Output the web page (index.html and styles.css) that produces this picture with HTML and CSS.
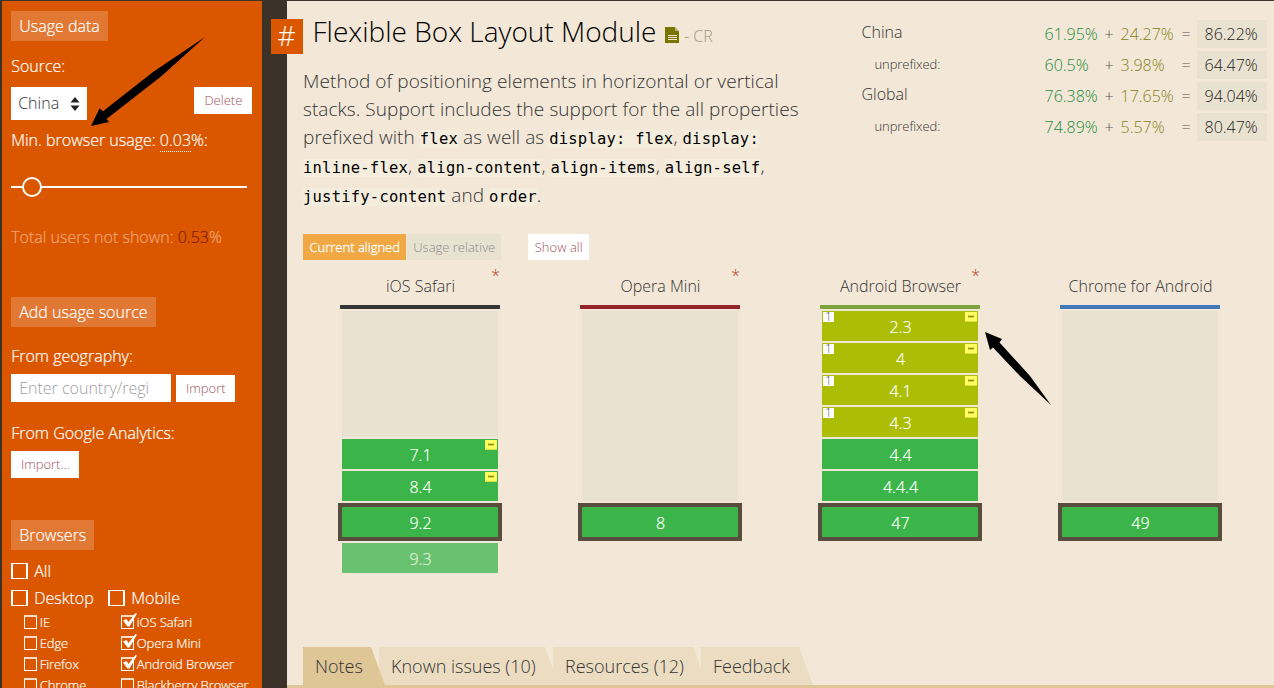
FILE: index.html
```
<!DOCTYPE html>
<html lang="en">
<head>
<meta charset="utf-8">
<title>Flexible Box Layout Module</title>
<link rel="stylesheet" href="styles.css">
</head>
<body>
<div class="page">
<aside class="sidebar">
  <section class="usage">
    <h2>Usage data</h2>
    <div class="label source">Source:</div>
    <div class="source-row"><div class="select">China <svg width="10" height="14" viewBox="0 0 10 14"><path d="M.5 5.500 5 0l4.500 5.500zM.5 8.500h9L5 14z" fill="#222"/></svg></div><button class="btn delete">Delete</button></div>
    <div class="label min">Min. browser usage: <span class="value">0.03</span>%:</div>
    <div class="slider"><i class="knob"></i></div>
    <div class="label total">Total users not shown: <span>0.53</span>%</div>
  </section>
  <section class="add">
    <h2>Add usage source</h2>
    <div class="label geo">From geography:</div>
    <div class="import-row"><div class="input">Enter country/regi</div><button class="btn import">Import</button></div>
    <div class="label ga">From Google Analytics:</div>
    <button class="btn import-ga">Import...</button>
  </section>
  <section class="browsers">
    <h2>Browsers</h2>
    <div class="check all"><i class="box"></i>All</div>
    <div class="groups">
      <div class="group">
        <div class="check"><i class="box"></i>Desktop</div>
        <div class="check sub"><i class="box"></i>IE</div>
        <div class="check sub"><i class="box"></i>Edge</div>
        <div class="check sub"><i class="box"></i>Firefox</div>
        <div class="check sub"><i class="box"></i>Chrome</div>
      </div>
      <div class="group">
        <div class="check"><i class="box"></i>Mobile</div>
        <div class="check sub"><i class="box"><svg width="17" height="16" viewBox="0 0 17 16"><path d="M2 8.500l3.500-1.500 2 3L14.500 1l1.500.5L8.500 14.500H6.500z" fill="#fff"/></svg></i>iOS Safari</div>
        <div class="check sub"><i class="box"><svg width="17" height="16" viewBox="0 0 17 16"><path d="M2 8.500l3.500-1.500 2 3L14.500 1l1.500.5L8.500 14.500H6.500z" fill="#fff"/></svg></i>Opera Mini</div>
        <div class="check sub"><i class="box"><svg width="17" height="16" viewBox="0 0 17 16"><path d="M2 8.500l3.500-1.500 2 3L14.500 1l1.500.5L8.500 14.500H6.500z" fill="#fff"/></svg></i>Android Browser</div>
        <div class="check sub"><i class="box"></i>Blackberry Browser</div>
      </div>
    </div>
  </section>
</aside>
<main class="feature">
  <a class="hash">#</a>
  <div class="top">
    <div class="intro">
      <h1><span class="name">Flexible Box Layout Module</span><svg width="14" height="16" viewBox="0 0 14 16"><path d="M0 0h9.500L14 4.500V16H0z" fill="#7a7400"/><path d="M10 0v4h4z" fill="#b9b37a"/><path d="M3 8.500h9M3 10.500h9M3 12.500h9" stroke="#f3e8d7"/></svg><small>- CR</small></h1>
      <div class="desc">
        <p>Method of positioning elements in horizontal or vertical</p>
        <p>stacks. Support includes the support for the all properties</p>
        <p>prefixed with <code>flex</code> as well as <code>display: flex</code>, <code>display:</code></p>
        <p><code>inline-flex</code>, <code>align-content</code>, <code>align-items</code>, <code>align-self</code>,</p>
        <p><code>justify-content</code> and <code>order</code>.</p>
      </div>
    </div>
    <div class="stats">
      <div class="stat"><span>China</span><b>61.95%</b><i>+</i><em>24.27%</em><i>=</i><strong>86.22%</strong></div>
      <div class="stat"><span class="un">unprefixed:</span><b>60.5%</b><i>+</i><em>3.98%</em><i>=</i><strong>64.47%</strong></div>
      <div class="stat"><span>Global</span><b>76.38%</b><i>+</i><em>17.65%</em><i>=</i><strong>94.04%</strong></div>
      <div class="stat"><span class="un">unprefixed:</span><b>74.89%</b><i>+</i><em>5.57%</em><i>=</i><strong>80.47%</strong></div>
    </div>
  </div>
  <div class="modes"><span class="mode active">Current aligned</span><span class="mode">Usage relative</span><span class="mode show">Show all</span></div>
  <div class="support">
    <div class="browser ios"><h3>iOS Safari<sup>*</sup></h3><div class="cell empty e4"></div><div class="cell yes">7.1<u></u></div><div class="cell yes">8.4<u></u></div><div class="cell yes current">9.2</div><div class="cell future">9.3</div></div>
    <div class="browser mini"><h3>Opera Mini<sup>*</sup></h3><div class="cell empty e6"></div><div class="cell yes current">8</div></div>
    <div class="browser android"><h3>Android Browser<sup>*</sup></h3><div class="cell part"><s>1</s>2.3<u></u></div><div class="cell part"><s>1</s>4<u></u></div><div class="cell part"><s>1</s>4.1<u></u></div><div class="cell part"><s>1</s>4.3<u></u></div><div class="cell yes">4.4</div><div class="cell yes">4.4.4</div><div class="cell yes current">47</div></div>
    <div class="browser chrome"><h3>Chrome for Android</h3><div class="cell empty e6"></div><div class="cell yes current">49</div></div>
  </div>
  <nav class="tabs"><a class="tab notes"><span>Notes</span></a><a class="tab issues"><span>Known issues (10)</span></a><a class="tab res"><span>Resources (12)</span></a><a class="tab feed"><span>Feedback</span></a></nav>
</main>
</div>
<svg class="arrows" width="1274" height="688" viewBox="0 0 1274 688"><path d="M91 126l8.500-17.500 3.500 2.800L153 72l52-35-44 39.500-54.500 42.500 2.500 3z"/><path d="M985 332l17 7-2.500 3.500L1030 376l21 29-31-29-27-28.500-3 2.500z"/></svg>
</body>
</html>
```
FILE: styles.css
```
* { box-sizing: border-box; }
body {
  margin: 0;
  height: 688px;
  overflow: hidden;
  background: #3c3328;
  font: 300 16px/20px "Open Sans", "Noto Sans", sans-serif;
  color: #333;
  white-space: nowrap;
  text-indent: .5px;
}
h1, h2, h3, p { margin: 0; font-weight: 300; }
.page { display: flex; gap: 25px; padding: 1px 0 0 2px; height: 688px; }

/* Sidebar */
.sidebar { width: 260px; flex: none; padding: 10px 9px 0; background: #da5700; color: #fff; overflow: hidden; text-indent: .2px; -webkit-text-stroke: .2px; }
.sidebar section { display: flex; flex-direction: column; align-items: flex-start; }
.usage { height: 286px; }
.add { height: 223px; }
h2 { height: 30px; line-height: 30px; padding: 0 8px; font-size: 16px; background: rgba(255,255,255,.2); }
.label { height: 20px; }
.source { margin: 15px 0 11px; }
.source-row { display: flex; align-items: flex-start; width: 241px; justify-content: space-between; }
.select { display: flex; align-items: center; justify-content: space-between; width: 76px; height: 33px; padding: 0 7px 1px; background: #fff; color: #333; -webkit-text-stroke: 0; }
.select svg { position: relative; top: 1px; }
.btn { height: 27px; padding: 0; border: 0; background: #fff; color: #a0525c; font: 300 13px/27px "Open Sans", sans-serif; text-indent: .7px; -webkit-text-stroke: 0; }
.delete { width: 58px; }
.min { margin-top: 10px; }
.value { border-bottom: 1px dotted #fff; }
.slider { width: 236px; height: 2px; margin-top: 36px; background: #fff; }
.knob { display: block; width: 20px; height: 20px; margin-left: 11px; border: 2px solid #fff; border-radius: 50%; background: #da5700; transform: translateY(-9px); }
.total { margin-top: 39px; color: #f2a47a; }
.total span { color: #861c00; }
.geo { margin: 19px 0 8px; }
.import-row { display: flex; align-items: flex-end; gap: 5px; }
.input { width: 160px; height: 28px; line-height: 28px; padding-left: 8px; background: #fff; color: #a0a0a0; -webkit-text-stroke: 0; }
.import { width: 59px; }
.ga { margin: 21px 0 8px; }
.import-ga { width: 68px; }
.check { display: flex; align-items: center; gap: 6px; height: 27px; }
.all { margin-top: 7px; }
.box { flex: none; width: 17px; height: 16px; border: solid #fff; border-width: 1px 2px; }
.groups { display: flex; }
.group:first-child { width: 97px; }
.sub { height: 21px; padding-left: 13px; gap: 2px; font-size: 13px; letter-spacing: -.08px; text-indent: .7px; }
.sub .box { width: 13px; height: 14px; border-width: 2px 1px 1px; border-top-color: #f9dcc8; }
.sub .box svg { display: block; margin: -5px 0 0 -1px; }

/* Feature panel */
.feature { position: relative; flex: 1; padding-left: 16px; background: #f3e8d7; }
.hash { position: absolute; left: -16px; top: 18px; width: 32px; height: 35px; background: #da5700; color: #fff; font-size: 28px; line-height: 32px; text-align: center; text-indent: -1px; }
.top { display: flex; height: 233px; }
.intro { width: 558px; padding-top: 10px; }
h1 { display: flex; align-items: center; height: 40px; padding-left: 9px; font-size: 28px; line-height: 40px; color: #000; }
h1 svg { margin: 7px 5px 0 8px; }
h1 small { font-size: 16px; color: #99997a; margin-top: 10px; }
.desc { padding-top: 16px; font-size: 19px; line-height: 28px; letter-spacing: .07px; text-indent: 0; }
.desc p { height: 28px; }
.desc p:nth-child(n+3) { height: 29px; }
code { font: 400 15.500px/20px "DejaVu Sans Mono", monospace; letter-spacing: .22px; color: #000; background: #f4eddd; }
.stats { display: flex; flex-direction: column; gap: 3px; padding-top: 19px; }
.stat { display: grid; grid-template-columns: 183px 60px 16px 61px 16px 70px; height: 28px; line-height: 28px; }
.stat span { line-height: 25px; }
.stat .un { font-size: 13px; padding-left: 13px; line-height: 27px; letter-spacing: -.08px; }
.stat b, .stat em, .stat i, .stat strong { font-style: normal; font-weight: 300; }
.stat b { color: #238b3c; }
.stat em { color: #858223; }
.stat i { color: #555; }
.stat strong { padding-left: 7px; background: #eae2d0; color: #222; }
.modes { display: flex; height: 26px; line-height: 26px; font-size: 13px; }
.mode { width: 94px; margin-left: 1px; text-align: center; background: #eae2d0; color: #8b8b8b; }
.mode.active { width: 103px; margin: 0; background: #efa844; color: #fff; -webkit-text-stroke: .3px; }
.mode.show { width: 61px; margin-left: 27px; background: #fff; color: #a0525c; }

.support { display: flex; gap: 80px; height: 387px; padding: 15px 0 0 37px; }
.browser { width: 160px; text-indent: 1px; }
h3 { position: relative; height: 34px; line-height: 22px; border-bottom: 4px solid #333; text-align: center; font-size: 16px; margin-bottom: 2px; }
.mini h3 { border-color: #962529; }
.android h3 { border-color: #7ca53b; }
.chrome h3 { border-color: #4278b9; }
sup { position: absolute; right: 0; top: -10px; font-size: 16px; line-height: 20px; color: #bd4330; }
.cell { position: relative; height: 30px; margin: 0 2px 2px; line-height: 32px; text-align: center; color: #fff; -webkit-text-stroke: .2px; }
.empty { background: #eae2d0; }
.e4 { height: 126px; }
.e6 { height: 190px; }
.yes { background: #3bb54a; }
.part { background: #abbd05; }
.future { background: #69c26f; color: #e1f0d8; }
.current { height: 38px; margin: 0 -2px 2px; border: 4px solid #594d3d; }
.cell u { position: absolute; right: 1px; top: 1px; width: 12px; height: 10px; background: #ffff60; border-bottom: 1px solid #d5e443; }
.cell u::after { content: ""; position: absolute; left: 3px; top: 3px; width: 6px; height: 1px; background: #8e9500; border: solid #d5d44a; border-width: 1px 0; }
.cell s { position: absolute; left: 1px; top: 1px; width: 11px; height: 10px; background: #fff; color: #555; font-size: 12px; line-height: 9px; text-indent: 0; text-decoration: none; -webkit-text-stroke: 0; }

.tabs { display: flex; height: 41px; margin-left: -16px; padding-left: 16px; border-bottom: 3px solid #dfc697; font-size: 18px; line-height: 38px; text-indent: 0; }
.tab { height: 38px; padding-left: 12px; background: #ecddc2; clip-path: polygon(0 0, calc(100% - 14px) 0, 100% 100%, 0 100%); }
.notes { width: 82px; background: #dfc697; z-index: 4; }
.issues { width: 180px; margin-left: -6px; z-index: 3; }
.res { width: 154px; margin-left: -6px; z-index: 2; }
.feed { width: 112px; margin-left: -6px; z-index: 1; }

.arrows { position: absolute; left: 0; top: 0; pointer-events: none; }
```
